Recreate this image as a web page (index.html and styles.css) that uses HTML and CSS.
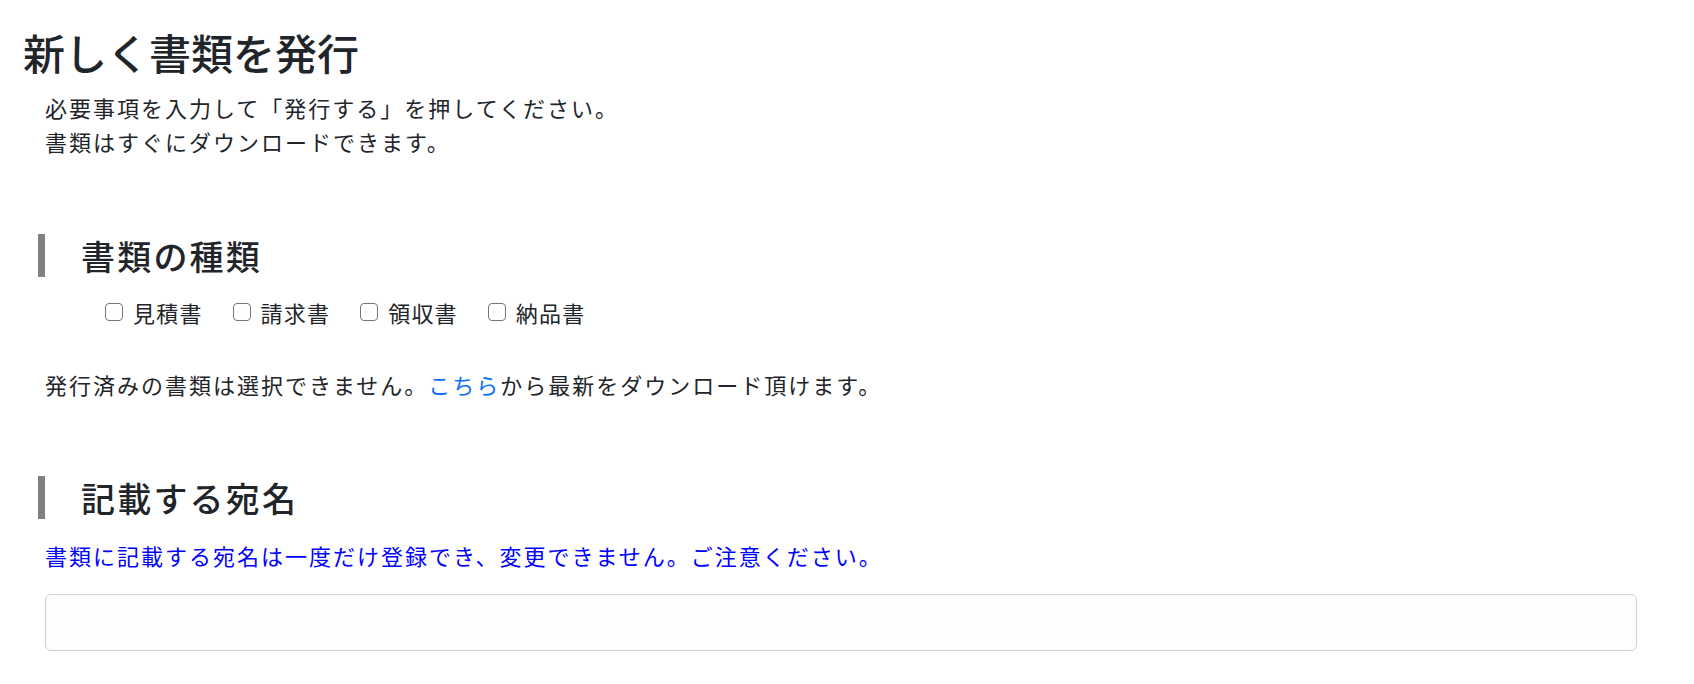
FILE: index.html
```html
<!DOCTYPE html>
<html lang="ja">
<head>
<meta charset="utf-8">
<title>新しく書類を発行</title>
<link rel="stylesheet" href="styles.css">
</head>
<body>
<main class="page">
  <h1 class="page-title">新しく書類を発行</h1>
  <div class="lead">
    <p>必要事項を入力して「発行する」を押してください。</p>
    <p>書類はすぐにダウンロードできます。</p>
  </div>

  <section class="section section-types">
    <h2 class="section-title">書類の種類</h2>
    <div class="doc-types">
      <label class="doc-type"><input type="checkbox" class="check"><span>見積書</span></label>
      <label class="doc-type"><input type="checkbox" class="check"><span>請求書</span></label>
      <label class="doc-type"><input type="checkbox" class="check"><span>領収書</span></label>
      <label class="doc-type"><input type="checkbox" class="check"><span>納品書</span></label>
    </div>
    <p class="note">発行済みの書類は選択できません。<a href="#" class="link">こちら</a>から最新をダウンロード頂けます。</p>
  </section>

  <section class="section section-name">
    <h2 class="section-title">記載する宛名</h2>
    <p class="warning">書類に記載する宛名は一度だけ登録でき、変更できません。ご注意ください。</p>
    <input type="text" class="text-input">
  </section>
</main>
</body>
</html>
```
FILE: styles.css
```css
html, body {
  margin: 0;
  padding: 0;
  background: #ffffff;
}

body {
  font-family: "Noto Sans CJK JP", "Noto Sans", sans-serif;
  color: #212529;
}

.page {
  padding: 27px 57px 0 45px;
}

.page-title {
  margin: 0 0 13px -22px;
  font-size: 42px;
  line-height: 50px;
  font-weight: 500;
  letter-spacing: 0;
}

.lead p,
.note,
.warning {
  font-size: 22px;
  line-height: 34px;
  letter-spacing: 2px;
}

.lead p {
  margin: 0;
}

.section-title {
  margin: 0 0 0 -7px;
  border-left: 7px solid #808080;
  padding-left: 36px;
  font-size: 34px;
  line-height: 43px;
  font-weight: 500;
  letter-spacing: 2.2px;
}

.section-types {
  margin-top: 76px;
}

.doc-types {
  display: flex;
  gap: 30px;
  margin: 18px 0 0 60px;
}

.doc-type {
  display: flex;
  align-items: center;
  gap: 10px;
  font-size: 22px;
  line-height: 34px;
  letter-spacing: 1.2px;
}

.check {
  appearance: none;
  -webkit-appearance: none;
  margin: 0;
  width: 18px;
  height: 18px;
  border: 1.5px solid #767676;
  border-radius: 4px;
  background: #fff;
}

.note {
  margin: 38px 0 0;
}

.link {
  color: #0d6efd;
  text-decoration: none;
}

.section-name {
  margin-top: 75px;
}

.warning {
  margin: 19px 0 0;
  color: #0000ff;
}

.text-input {
  display: block;
  box-sizing: border-box;
  width: 100%;
  height: 57px;
  margin-top: 22px;
  border: 1px solid #d0d0d8;
  border-radius: 6px;
  background: #fdfdfe;
}
```
